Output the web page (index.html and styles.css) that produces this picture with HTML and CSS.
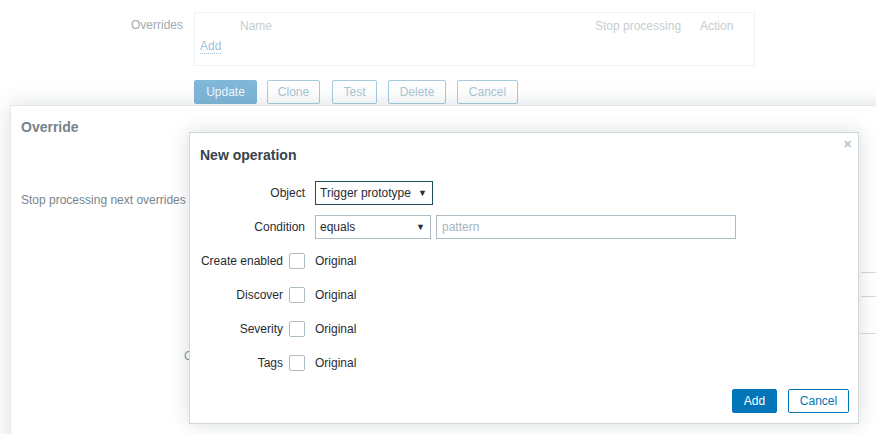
FILE: index.html
```html
<!DOCTYPE html>
<html>
<head>
<meta charset="utf-8">
<link rel="stylesheet" href="styles.css">
</head>
<body>
<div class="page">
  <div class="bg-row">
    <div class="bg-label">Overrides</div>
    <div class="bg-table">
      <div class="bg-thead">
        <span class="th-name">Name</span>
        <span class="th-stop">Stop processing</span>
        <span class="th-action">Action</span>
      </div>
      <a class="bg-add">Add</a>
    </div>
  </div>
  <div class="bg-buttons">
    <span class="bg-btn primary w63">Update</span>
    <span class="bg-btn w53">Clone</span>
    <span class="bg-btn w45">Test</span>
    <span class="bg-btn w58">Delete</span>
    <span class="bg-btn w61">Cancel</span>
  </div>
</div>

<div class="dlg-override">
  <div class="ov-title">Override</div>
  <div class="ov-row">Stop processing next overrides</div>
  <div class="ov-lines">
    <div class="ov-line l1"></div>
    <div class="ov-line l2"></div>
    <div class="ov-line l3"></div>
  </div>
  <div class="ov-op">Operations</div>
</div>

<div class="dlg-new">
  <div class="nd-head">
    <div class="nd-title">New operation</div>
    <span class="nd-close">&#x2715;</span>
  </div>
  <div class="nd-form">
    <div class="nd-label">Object</div>
    <div class="nd-field">
      <div class="sel sel-focus"><span>Trigger prototype</span><span class="arr">&#9660;</span></div>
    </div>
    <div class="nd-label">Condition</div>
    <div class="nd-field">
      <div class="sel sel-cond"><span>equals</span><span class="arr">&#9660;</span></div>
      <div class="inp">pattern</div>
    </div>
    <div class="nd-label">Create enabled <span class="cb"></span></div>
    <div class="nd-field">Original</div>
    <div class="nd-label">Discover <span class="cb"></span></div>
    <div class="nd-field">Original</div>
    <div class="nd-label">Severity <span class="cb"></span></div>
    <div class="nd-field">Original</div>
    <div class="nd-label">Tags <span class="cb"></span></div>
    <div class="nd-field">Original</div>
  </div>
  <div class="nd-foot">
    <span class="btn btn-primary">Add</span>
    <span class="btn btn-alt">Cancel</span>
  </div>
</div>
</body>
</html>
```

FILE: styles.css
```css
* { box-sizing: border-box; }
html, body { margin: 0; padding: 0; }
body {
  width: 876px;
  height: 434px;
  overflow: hidden;
  position: relative;
  background: #fff;
  font-family: "Liberation Sans", Arial, sans-serif;
  font-size: 12px;
  color: #1f2c33;
}

/* background page (faded) */
.page { padding-top: 12px; }
.bg-row { display: flex; align-items: flex-start; }
.bg-label {
  width: 184px;
  text-align: right;
  padding-top: 6px;
  padding-right: 1px;
  color: #a4abaf;
}
.bg-table {
  margin-left: 10px;
  width: 561px;
  height: 54px;
  border: 1px solid #f0f2f3;
  padding: 6px 0 0 5px;
}
.bg-thead { display: flex; height: 20px; color: #c8cdd0; }
.th-name { margin-left: 40px; width: 355px; }
.th-stop { width: 105px; }
.bg-add {
  display: inline-block;
  color: #a2c2d8;
  border-bottom: 1px dotted #a2c2d8;
  line-height: 13px;
}
.bg-buttons {
  display: flex;
  gap: 11px;
  margin-left: 194px;
  margin-top: 14px;
}
.bg-btn {
  height: 24px;
  line-height: 22px;
  border: 1px solid #a6cbe0;
  border-radius: 2px;
  color: #a9c6d7;
  text-align: center;
  background: #fff;
}
.bg-btn.primary { background: #80b8da; border-color: #80b8da; color: #f2f8fc; }
.w63 { width: 63px; }
.w53 { width: 53px; margin-left: -1px; }
.w45 { width: 45px; margin-left: 1px; }
.w58 { width: 58px; }
.w61 { width: 61px; }

/* override dialog */
.dlg-override {
  position: absolute;
  left: 10px;
  top: 105px;
  width: 920px;
  height: 400px;
  background: #fff;
  border: 1px solid #e3e7e9;
  box-shadow: 0 0 22px rgba(40, 60, 70, 0.16);
  padding: 13px 0 0 10px;
}
.ov-title { font-size: 14px; font-weight: bold; color: #77838a; }
.ov-row { margin-top: 58px; color: #7a858b; }
.ov-lines { margin-top: 65px; margin-left: 840px; width: 60px; }
.ov-line { border-top: 1px solid #d3d9dc; }
.l2 { margin-top: 23px; }
.l3 { margin-top: 36px; }
.ov-op { margin-top: 15px; margin-left: 163px; color: #8f999e; }

/* new operation dialog */
.dlg-new {
  position: absolute;
  left: 189px;
  top: 132px;
  width: 670px;
  height: 292px;
  background: #fff;
  border: 1px solid #cfd7db;
  box-shadow: 0 0 18px rgba(40, 60, 70, 0.18);
  display: flex;
  flex-direction: column;
}
.nd-head { position: relative; padding: 14px 10px 0 10px; height: 48px; }
.nd-title { font-size: 14px; font-weight: bold; color: #35434b; }
.nd-close {
  position: absolute;
  right: 6px;
  top: 5px;
  font-size: 11px;
  color: #bcc3c7;
  font-weight: bold;
}
.nd-form {
  display: grid;
  grid-template-columns: 115px 1fr;
  column-gap: 10px;
  row-gap: 10px;
  grid-auto-rows: 24px;
  padding-left: 0;
}
.nd-label {
  display: flex;
  align-items: center;
  justify-content: flex-end;
  gap: 6px;
  color: #1f2c33;
}
.nd-field { display: flex; align-items: center; gap: 5px; color: #1f2c33; }
.sel {
  height: 24px;
  border: 1px solid #acbbc4;
  display: flex;
  align-items: center;
  justify-content: space-between;
  padding: 0 5px 0 4px;
  color: #1f2c33;
}
.sel-focus { width: 118px; border-color: #1e4d5e; }
.sel-cond { width: 116px; }
.arr { font-size: 9px; color: #1f2c33; }
.inp {
  width: 300px;
  height: 24px;
  border: 1px solid #acbbc4;
  padding: 0 5px;
  line-height: 22px;
  color: #a9b4ba;
}
.cb {
  display: inline-block;
  width: 16px;
  height: 16px;
  border: 1px solid #acbbc4;
  border-radius: 2px;
  background: #fff;
}
.nd-foot {
  margin-top: auto;
  display: flex;
  justify-content: flex-end;
  gap: 11px;
  padding: 0 9px 10px 0;
}
.btn {
  height: 24px;
  line-height: 22px;
  border: 1px solid #0275b8;
  border-radius: 2px;
  text-align: center;
}
.btn-primary { width: 45px; background: #0275b8; color: #fff; }
.btn-alt { width: 61px; background: #fff; color: #0275b8; }
```
